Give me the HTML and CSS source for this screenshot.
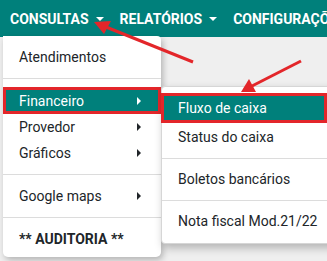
FILE: index.html
```html
<!DOCTYPE html>
<html lang="pt-BR">
<head>
    <meta charset="UTF-8">
    <meta name="viewport" content="width=device-width, initial-scale=1.0">
    <title>Menu</title>
    <link rel="stylesheet" href="styles.css">
</head>
<body>

    <nav class="navbar">
        <a class="nav-link">CONSULTAS <span class="caret-down"></span></a>
        <a class="nav-link">RELATÓRIOS <span class="caret-down"></span></a>
        <a class="nav-link">CONFIGURAÇÕES</a>
    </nav>

    <div class="page"></div>

    <!-- dropdown CONSULTAS -->
    <ul class="dropdown">
        <li class="item">Atendimentos</li>
        <li class="divider"></li>
        <li class="item sub active">Financeiro <span class="caret-right"></span></li>
        <li class="item sub">Provedor <span class="caret-right"></span></li>
        <li class="item sub">Gráficos <span class="caret-right"></span></li>
        <li class="divider"></li>
        <li class="item sub">Google maps <span class="caret-right"></span></li>
        <li class="divider"></li>
        <li class="item bold">** AUDITORIA **</li>
    </ul>

    <!-- submenu Financeiro -->
    <ul class="submenu">
        <li class="item active">Fluxo de caixa</li>
        <li class="item">Status do caixa</li>
        <li class="divider"></li>
        <li class="item">Boletos bancários</li>
        <li class="divider"></li>
        <li class="item">Nota fiscal Mod.21/22</li>
    </ul>

    <!-- setas de destaque -->
    <svg class="arrows" width="327" height="261" viewBox="0 0 327 261">
        <line x1="193" y1="62" x2="106" y2="27" stroke="#e3262a" stroke-width="3"/>
        <polygon points="94,22 111,21 104,34" fill="#e3262a"/>
        <line x1="301" y1="61" x2="252" y2="86" stroke="#e3262a" stroke-width="3"/>
        <polygon points="241,92 249,79 256,92" fill="#e3262a"/>
    </svg>

</body>
</html>
```

FILE: styles.css
```css
/* Basic styling */
body {
    font-family: Roboto, "Liberation Sans", sans-serif;
    margin: 0;
    padding: 0;
    background-color: #efefef;
    width: 327px;
    height: 261px;
    overflow: hidden;
    position: relative;
}

.navbar {
    background-color: #00807b;
    height: 37px;
    display: flex;
    align-items: center;
    gap: 16px;
    padding-left: 10px;
    white-space: nowrap;
}

.nav-link {
    color: #fff;
    font-weight: bold;
    font-size: 14px;
    display: flex;
    align-items: center;
    gap: 2px;
}

.caret-down {
    display: inline-block;
    width: 0;
    height: 0;
    margin-left: 5px;
    border-left: 4px solid transparent;
    border-right: 4px solid transparent;
    border-top: 4px solid #fff;
}

.page {
    height: 224px;
}

ul {
    list-style: none;
    margin: 0;
}

.dropdown {
    position: absolute;
    left: 3px;
    top: 36px;
    width: 158px;
    padding: 8px 0 5px 0;
    background-color: #fff;
    border-radius: 0 4px 5px 5px;
    box-shadow: 2px 3px 6px rgba(0, 0, 0, 0.25);
    box-sizing: border-box;
}

.submenu {
    position: absolute;
    left: 161px;
    top: 86px;
    width: 175px;
    padding: 6px 0 8px 0;
    background-color: #fff;
    border: 1px solid #d6d6d6;
    border-radius: 4px;
    box-shadow: 2px 4px 8px rgba(0, 0, 0, 0.25);
    box-sizing: border-box;
}

.item {
    font-size: 14px;
    color: #212529;
    height: 26px;
    line-height: 26px;
    padding-left: 16px;
    display: flex;
    align-items: center;
    white-space: nowrap;
    box-sizing: border-box;
}

.submenu .item {
    height: 28px;
    line-height: 28px;
}

.item.sub {
    justify-content: space-between;
    padding-right: 20px;
}

.item.bold {
    font-weight: bold;
}

.item.active {
    background-color: #00807b;
    color: #fff;
    border: 3px solid #e3262a;
    padding-left: 13px;
}

.dropdown .item.active {
    height: 27px;
    padding-right: 17px;
}

.submenu .item.active {
    height: 30px;
    margin-left: -1px;
    width: 166px;
    padding-left: 14px;
}

.dropdown .item.active .caret-right {
    border-left-color: #fff;
}

.caret-right {
    display: inline-block;
    width: 0;
    height: 0;
    border-top: 4px solid transparent;
    border-bottom: 4px solid transparent;
    border-left: 4px solid #212529;
}

.divider {
    height: 1px;
    background-color: #dcdcdc;
    margin: 8px 0;
}

.submenu .divider {
    margin: 7px 0 6px 0;
}

.arrows {
    position: absolute;
    left: 0;
    top: 0;
}
```
